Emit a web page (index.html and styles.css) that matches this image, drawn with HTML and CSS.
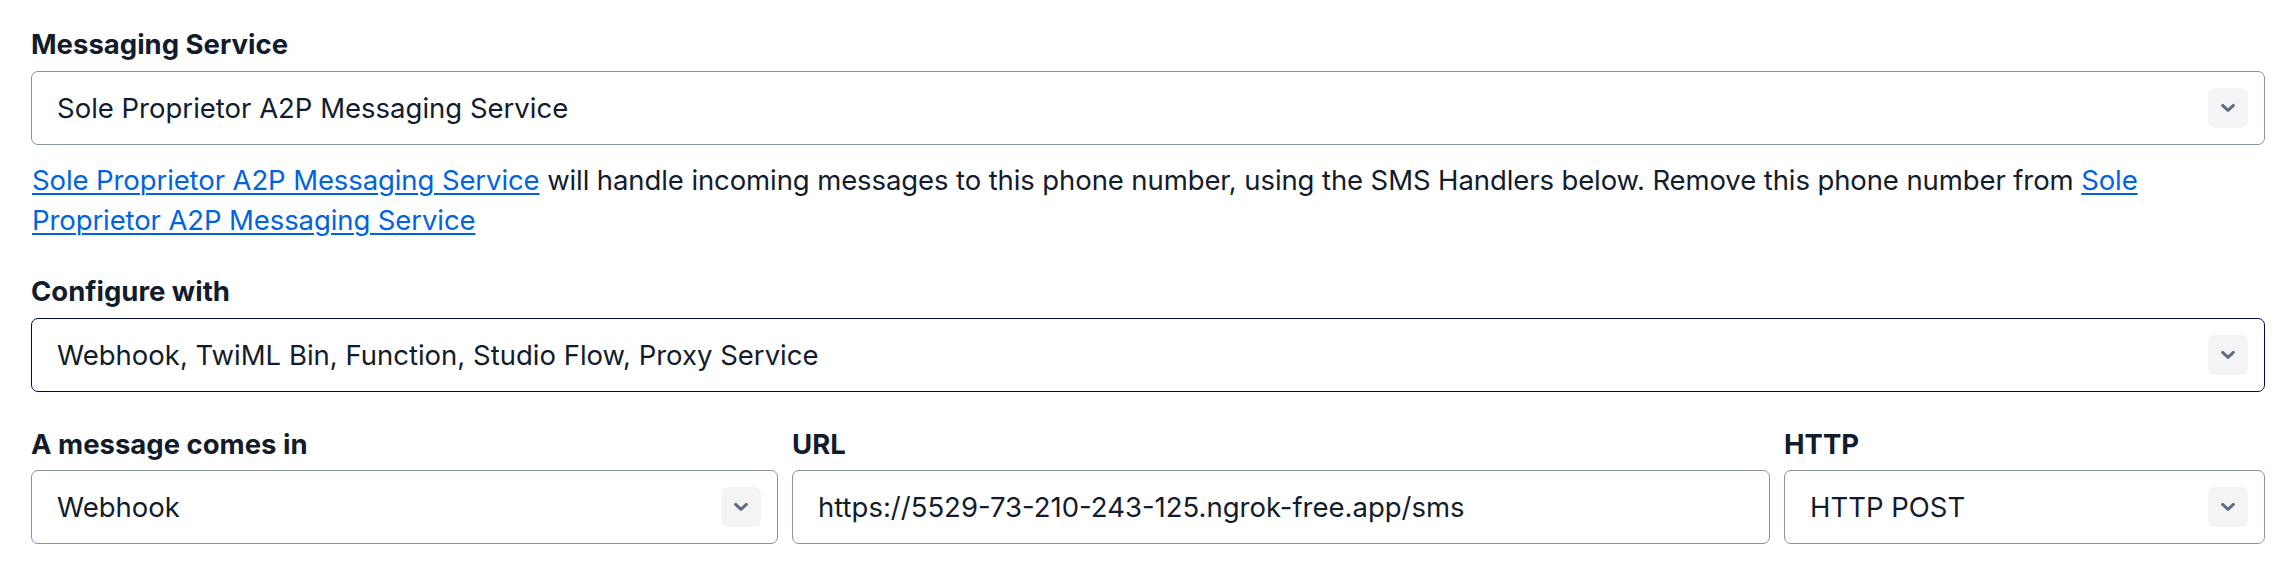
FILE: index.html
```html
<!DOCTYPE html>
<html lang="en">
<head>
<meta charset="utf-8">
<title>Messaging configuration</title>
<link rel="stylesheet" href="styles.css">
</head>
<body>
<main class="form">
  <section class="field">
    <div class="label">Messaging Service</div>
    <div class="select">
      <span class="value">Sole Proprietor A2P Messaging Service</span>
      <span class="chev"><svg viewBox="0 0 20 20" width="20" height="20"><path d="M4.6 7.4 10 12.4l5.4-5" fill="none" stroke="currentColor" stroke-width="3" stroke-linecap="round" stroke-linejoin="round"/></svg></span>
    </div>
    <p class="help"><a href="#">Sole Proprietor A2P Messaging Service</a><span> will handle incoming messages to this phone number, using the SMS Handlers below. Remove this phone number from </span><a href="#">Sole</a> <a href="#">Proprietor A2P Messaging Service</a></p>
  </section>

  <section class="field">
    <div class="label">Configure with</div>
    <div class="select focused">
      <span class="value">Webhook, TwiML Bin, Function, Studio Flow, Proxy Service</span>
      <span class="chev"><svg viewBox="0 0 20 20" width="20" height="20"><path d="M4.6 7.4 10 12.4l5.4-5" fill="none" stroke="currentColor" stroke-width="3" stroke-linecap="round" stroke-linejoin="round"/></svg></span>
    </div>
  </section>

  <section class="row">
    <div class="col">
      <div class="label">A message comes in</div>
      <div class="select">
        <span class="value">Webhook</span>
        <span class="chev"><svg viewBox="0 0 20 20" width="20" height="20"><path d="M4.6 7.4 10 12.4l5.4-5" fill="none" stroke="currentColor" stroke-width="3" stroke-linecap="round" stroke-linejoin="round"/></svg></span>
      </div>
    </div>
    <div class="col">
      <div class="label">URL</div>
      <div class="select input">
        <span class="value">https://5529-73-210-243-125.ngrok-free.app/sms</span>
      </div>
    </div>
    <div class="col">
      <div class="label">HTTP</div>
      <div class="select">
        <span class="value">HTTP POST</span>
        <span class="chev"><svg viewBox="0 0 20 20" width="20" height="20"><path d="M4.6 7.4 10 12.4l5.4-5" fill="none" stroke="currentColor" stroke-width="3" stroke-linecap="round" stroke-linejoin="round"/></svg></span>
      </div>
    </div>
  </section>
</main>
</body>
</html>
```

FILE: styles.css
```css
html, body {
  margin: 0;
  padding: 0;
  background: #ffffff;
}

body {
  font-family: Inter, "Noto Sans", "Liberation Sans", sans-serif;
  font-size: 27.5px;
  color: #121c2d;
}

.form {
  width: 2234px;
  padding: 27px 0 0 31px;
  display: flex;
  flex-direction: column;
}

.label {
  font-weight: 700;
  line-height: 35px;
  margin-bottom: 9px;
  color: #121c2d;
}

.select {
  box-sizing: border-box;
  height: 74px;
  border: 1.5px solid #8891aa;
  border-radius: 7px;
  display: flex;
  align-items: center;
  padding: 0 16px 0 25px;
  background: #fff;
}

.select.focused {
  border-color: #030b4d;
}

.value {
  flex: 1;
  line-height: 35px;
  white-space: nowrap;
}

.chev {
  width: 40px;
  height: 40px;
  border-radius: 7px;
  background: #f4f4f6;
  color: #606b85;
  display: flex;
  align-items: center;
  justify-content: center;
}

.help {
  margin: 15px 0 0 1px;
  line-height: 40px;
  letter-spacing: -0.1px;
}

.help a {
  color: #0263e0;
  text-decoration: underline;
  text-underline-offset: 3px;
  text-decoration-thickness: 1.5px;
}

.field + .field {
  margin-top: 34px;
}

.row {
  margin-top: 35px;
  display: grid;
  grid-template-columns: 747px 978px 481px;
  column-gap: 14px;
}

.row .label {
  margin-bottom: 8px;
}
```
